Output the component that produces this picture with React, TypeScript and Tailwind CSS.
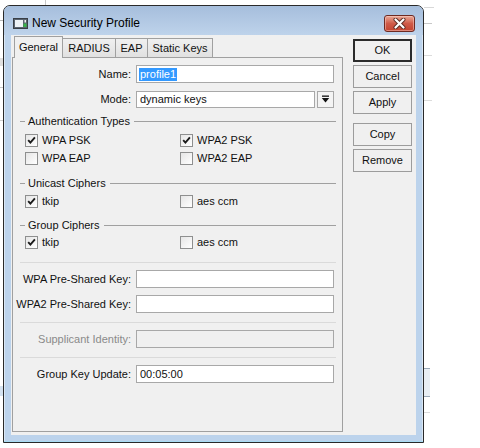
import React from 'react';

const Check: React.FC<{ checked?: boolean }> = ({ checked }) => (
  <span className="w-[13px] h-[13px] border border-[#8e8f8f] bg-gradient-to-br from-[#e6e6e6] to-white flex items-center justify-center shrink-0">
    {checked && (
      <svg width="9" height="9" viewBox="0 0 9 9">
        <path d="M1.2 4.2 L3.4 6.6 L7.9 1.4" stroke="#1a1a1a" strokeWidth="1.9" fill="none" />
      </svg>
    )}
  </span>
);

const CheckItem: React.FC<{ label: string; checked?: boolean; wide?: boolean }> = ({ label, checked, wide }) => (
  <div className={`flex items-center gap-[4px] ${wide ? 'w-[155px]' : ''}`}>
    <Check checked={checked} />
    <span>{label}</span>
  </div>
);

const GroupHeader: React.FC<{ title: string }> = ({ title }) => (
  <div className="flex items-center h-[12px] pl-[7px] pr-[6px]">
    <div className="w-[5px] h-px bg-[#a0a0a0]" />
    <span className="pl-[3px] pr-[4px] leading-none">{title}</span>
    <div className="flex-1 h-px bg-[#a0a0a0]" />
  </div>
);

const Separator = () => <div className="h-px bg-[#dadada] ml-[7px] mr-[6px]" />;

const Field: React.FC<{ label: string; value?: string; disabled?: boolean; className?: string }> = ({
  label,
  value,
  disabled,
  className,
}) => (
  <div className={`flex items-center h-[18px] ${className ?? ''}`}>
    <div className={`w-[118px] text-right ${disabled ? 'text-[#8a8a8a]' : ''}`}>{label}</div>
    <div
      className={`ml-[5px] w-[198px] h-[18px] border border-[#a8a8a8] flex items-center pl-[3px] ${
        disabled ? 'bg-[#f0f0f0]' : 'bg-white'
      }`}
    >
      {value}
    </div>
  </div>
);

const Btn: React.FC<{ label: string; def?: boolean; className?: string }> = ({ label, def, className }) => (
  <div
    className={`w-[59px] h-[23px] flex items-center justify-center bg-[#f0f0f0] ${
      def ? 'border-2 border-[#2b2b2b]' : 'border border-[#9c9c9c]'
    } ${className ?? ''}`}
  >
    {label}
  </div>
);

const App: React.FC = () => {
  return (
    <div className="relative w-[480px] h-[448px] bg-white overflow-hidden font-['Liberation_Sans',Arial,sans-serif] text-[11px] text-[#111]">
      {/* bits of other windows on the desktop */}
      <div className="absolute left-[45px] top-0 w-px h-[5px] bg-[#c8c8c8]" />
      <div className="absolute left-0 top-[20px] w-[3px] h-px bg-[#b8b8b8]" />
      <div className="absolute left-0 top-[58px] w-[3px] h-[8px] bg-[#e0e0e0]" />
      <div className="absolute left-0 top-[87px] w-[3px] h-px bg-[#c8c8c8]" />
      <div className="absolute left-0 top-[120px] w-[3px] h-px bg-[#d0d0d0]" />
      <div className="absolute left-0 top-[386px] w-[3px] h-[10px] bg-[#d4e2f0]" />
      <div className="absolute left-[424px] top-[7px] w-[10px] h-px bg-[#d8d8d8]" />
      <div className="absolute left-[424px] top-[23px] w-[8px] h-px bg-[#c8c8c8]" />
      <div className="absolute left-[424px] top-[55px] w-[8px] h-px bg-[#dcdcdc]" />
      <div className="absolute left-[424px] top-[100px] w-[8px] h-px bg-[#dcdcdc]" />
      <div className="absolute left-[424px] top-[368px] w-[6px] h-[29px] border-t border-b border-[#9aa9b8] bg-[#e8eef4]" />
      <div className="absolute left-[424px] top-[412px] w-[6px] h-px bg-[#dcdcdc]" />

      {/* window */}
      <div className="relative ml-[3px] mt-[5px] w-[421px] h-[438px] border border-[#2a2a2a] rounded-t-[7px] bg-[#bcd3ec] flex flex-col shadow-[inset_0_0_0_1px_rgba(255,255,255,0.45)]">
        {/* title bar */}
        <div className="h-[29px] flex items-center pt-[5px] pl-[9px] pr-[8px] rounded-t-[6px] bg-gradient-to-b from-[#a6bedc] to-[#bed3eb]">
          <svg width="15" height="11" viewBox="0 0 15 11" className="shrink-0">
            <rect x="0.5" y="0.5" width="14" height="10" fill="#5a6470" stroke="#3a3f46" />
            <rect x="2" y="2" width="8" height="7" fill="#eef2f6" />
            <rect x="10.5" y="5.5" width="3" height="3.5" fill="#39b54a" />
            <rect x="11.5" y="2" width="1.5" height="2.5" fill="#f4f4f4" />
          </svg>
          <span className="ml-[4px] text-[12px] text-black">New Security Profile</span>
          <div className="flex-1" />
          <div className="w-[31px] h-[17px] rounded-[3px] border border-[#6e2a22] bg-gradient-to-b from-[#e9a897] via-[#cf5a48] to-[#c4432f] flex items-center justify-center shadow-[inset_0_0_0_1px_rgba(255,220,210,0.45)]">
            <svg width="13" height="11" viewBox="0 0 13 11">
              <path d="M2.5 1.5 L10.5 9.5 M10.5 1.5 L2.5 9.5" stroke="#5a2a22" strokeWidth="4" strokeLinecap="round" />
              <path d="M2.5 1.5 L10.5 9.5 M10.5 1.5 L2.5 9.5" stroke="#ffffff" strokeWidth="2.2" strokeLinecap="round" />
            </svg>
          </div>
        </div>

        {/* frame + client */}
        <div className="flex-1 px-[7px] pb-[7px] flex flex-col">
          <div className="h-[400px] bg-[#f0f0f0] flex">
            {/* tabbed panel */}
            <div className="ml-px w-[331px] flex flex-col">
              <div className="h-[23px] flex items-end pl-[2px] -mb-px relative z-10">
                <div className="w-[49px] h-[22px] border border-b-0 border-[#a0a0a0] bg-[#f0f0f0] flex items-center justify-center pb-[1px]">
                  General
                </div>
                <div className="w-[53px] h-[20px] border border-l-0 border-[#a0a0a0] bg-gradient-to-b from-[#f0f0f0] to-[#e1e1e1] flex items-center justify-center">
                  RADIUS
                </div>
                <div className="w-[32px] h-[20px] border border-l-0 border-[#a0a0a0] bg-gradient-to-b from-[#f0f0f0] to-[#e1e1e1] flex items-center justify-center">
                  EAP
                </div>
                <div className="w-[65px] h-[20px] border border-l-0 border-[#a0a0a0] bg-gradient-to-b from-[#f0f0f0] to-[#e1e1e1] flex items-center justify-center">
                  Static Keys
                </div>
              </div>
              <div className="h-[375px] border border-[#a0a0a0] flex flex-col pt-[7px]">
                {/* Name */}
                <div className="flex items-center h-[18px]">
                  <div className="w-[118px] text-right">Name:</div>
                  <div className="ml-[5px] w-[198px] h-[18px] border border-[#a8a8a8] bg-white flex items-center pl-[2px]">
                    <span className="bg-[#3399ff] text-white px-[1px] leading-[13px]">profile1</span>
                  </div>
                </div>
                {/* Mode */}
                <div className="flex items-center h-[17px] mt-[8px]">
                  <div className="w-[118px] text-right">Mode:</div>
                  <div className="ml-[5px] w-[179px] h-[17px] border border-[#a8a8a8] bg-white flex items-center pl-[3px]">
                    dynamic keys
                  </div>
                  <div className="ml-[2px] w-[17px] h-[17px] border border-[#a8a8a8] bg-[#f4f4f4] flex items-center justify-center">
                    <svg width="9" height="9" viewBox="0 0 9 9">
                      <rect x="1" y="0.5" width="7" height="1.3" fill="#111" />
                      <path d="M0.8 3 H8.2 L4.5 7.6 Z" fill="#111" />
                    </svg>
                  </div>
                </div>

                <div className="mt-[7px]">
                  <GroupHeader title="Authentication Types" />
                </div>
                <div className="h-[18px] mt-[4px] pl-[12px] flex items-center">
                  <CheckItem label="WPA PSK" checked wide />
                  <CheckItem label="WPA2 PSK" checked />
                </div>
                <div className="h-[18px] pl-[12px] flex items-center">
                  <CheckItem label="WPA EAP" wide />
                  <CheckItem label="WPA2 EAP" />
                </div>

                <div className="mt-[10px]">
                  <GroupHeader title="Unicast Ciphers" />
                </div>
                <div className="h-[18px] mt-[3px] pl-[12px] flex items-center">
                  <CheckItem label="tkip" checked wide />
                  <CheckItem label="aes ccm" />
                </div>

                <div className="mt-[9px]">
                  <GroupHeader title="Group Ciphers" />
                </div>
                <div className="h-[18px] mt-[2px] pl-[12px] flex items-center">
                  <CheckItem label="tkip" checked wide />
                  <CheckItem label="aes ccm" />
                </div>

                <div className="mt-[11px]">
                  <Separator />
                </div>
                <Field label="WPA Pre-Shared Key:" className="mt-[7px]" />
                <Field label="WPA2 Pre-Shared Key:" className="mt-[7px]" />
                <div className="mt-[9px]">
                  <Separator />
                </div>
                <Field label="Supplicant Identity:" disabled className="mt-[7px]" />
                <div className="mt-[9px]">
                  <Separator />
                </div>
                <Field label="Group Key Update:" value="00:05:00" className="mt-[7px]" />
              </div>
            </div>

            {/* buttons */}
            <div className="ml-[10px] pt-[4px] flex flex-col">
              <Btn label="OK" def />
              <Btn label="Cancel" className="mt-[3px]" />
              <Btn label="Apply" className="mt-[3px]" />
              <Btn label="Copy" className="mt-[9px]" />
              <Btn label="Remove" className="mt-[3px]" />
            </div>
          </div>
        </div>
        <div className="absolute left-0 right-0 bottom-0 h-px bg-[#a9dbf3]" />
      </div>
    </div>
  );
};

export default App;
